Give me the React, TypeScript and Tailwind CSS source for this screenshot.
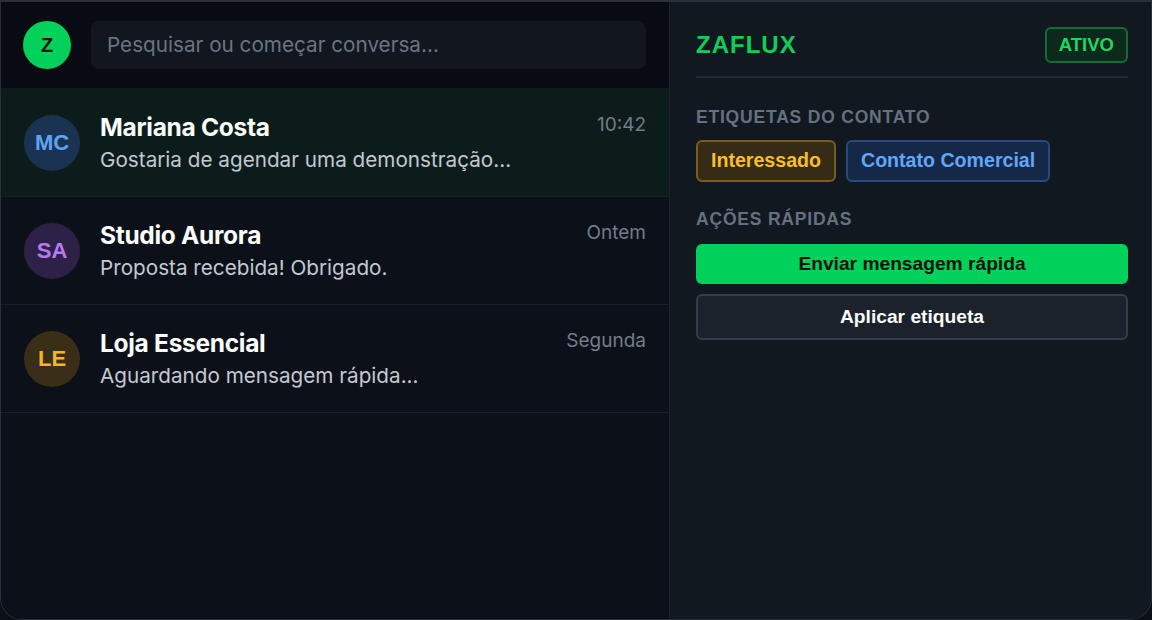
import React from "react";

const rows = [
  { initials: "MC", name: "Mariana Costa", time: "10:42", msg: "Gostaria de agendar uma demonstração...", avBg: "bg-[#1b3352]", avText: "text-[#5fa3f5]", active: true },
  { initials: "SA", name: "Studio Aurora", time: "Ontem", msg: "Proposta recebida! Obrigado.", avBg: "bg-[#2e2147]", avText: "text-[#b57bf0]", active: false },
  { initials: "LE", name: "Loja Essencial", time: "Segunda", msg: "Aguardando mensagem rápida...", avBg: "bg-[#3a2e17]", avText: "text-[#f5b524]", active: false },
];

export default function App() {
  return (
    <div className="w-[1152px] h-[620px] overflow-hidden bg-[#0b1017]">
      <div className="flex h-full border-t-2 border-x border-b border-[#2a3039] rounded-b-[22px] overflow-hidden font-['Inter',sans-serif]">
        {/* Left */}
        <div className="w-[669px] shrink-0 flex flex-col bg-[#0c1119] border-r border-[#1d232c]">
          <div className="h-[87px] shrink-0 flex items-center gap-[20px] pl-[22px] pr-[23px] bg-[#080c12] border-b border-[#141a22]">
            <div className="w-[48px] h-[48px] rounded-full bg-[#00d15b] flex items-center justify-center text-[#04120a] font-bold text-[20px] font-['Liberation_Sans',sans-serif]">Z</div>
            <div className="flex-1 h-[48px] rounded-lg bg-[#12171f] flex items-center px-[16px] text-[20.7px] text-[#6b7482]">
              Pesquisar ou começar conversa...
            </div>
          </div>
          {rows.map((r) => (
            <div
              key={r.name}
              className={`h-[108px] shrink-0 flex items-center gap-[20px] pl-[23px] pr-[23px] border-b border-[#1a2029] ${r.active ? "bg-[#0c1c1b]" : ""}`}
            >
              <div className={`w-[56px] h-[56px] rounded-full shrink-0 flex items-center justify-center font-bold text-[22px] font-['Liberation_Sans',sans-serif] ${r.avBg} ${r.avText}`}>
                {r.initials}
              </div>
              <div className="flex-1 flex flex-col gap-[5px] -mt-[1px]">
                <div className="flex items-start justify-between">
                  <span className="text-[24.5px] leading-[30px] font-bold text-white tracking-[-0.3px]">{r.name}</span>
                  <span className="text-[19px] leading-[26px] text-[#737c89]">{r.time}</span>
                </div>
                <div className="text-[20.7px] leading-[26px] text-[#c3c9d2]">{r.msg}</div>
              </div>
            </div>
          ))}
        </div>
        {/* Right */}
        <div className="flex-1 bg-[#111820] pl-[26px] pr-[23px] font-['Liberation_Sans',sans-serif]">
          <div className="h-[76px] flex items-center justify-between border-b-2 border-[#242b35] pt-[12px]">
            <span className="text-[24px] font-bold text-[#12cc5c] tracking-[1px]">ZAFLUX</span>
            <span className="h-[36px] px-[12px] flex items-center rounded-md border-2 border-[#156b38] bg-[#0b2a1b] text-[#1ed760] font-bold text-[18.5px]">ATIVO</span>
          </div>
          <div className="mt-[27px] text-[17.5px] leading-[24px] font-bold text-[#667180] tracking-[0.8px]">ETIQUETAS DO CONTATO</div>
          <div className="mt-[11px] flex gap-[10px]">
            <span className="h-[42px] px-[13px] flex items-center rounded-md border-2 border-[#7a5d1e] bg-[#362b14] text-[#fbbf24] font-bold text-[19.6px]">Interessado</span>
            <span className="h-[42px] px-[13px] flex items-center rounded-md border-2 border-[#294a7e] bg-[#162848] text-[#62a6f8] font-bold text-[19.6px]">Contato Comercial</span>
          </div>
          <div className="mt-[25px] text-[17.5px] leading-[24px] font-bold text-[#667180] tracking-[0.8px]">AÇÕES RÁPIDAS</div>
          <div className="mt-[13px] h-[40px] rounded-md bg-[#00d15b] flex items-center justify-center text-[19.2px] font-bold text-[#04120a]">
            Enviar mensagem rápida
          </div>
          <div className="mt-[10px] h-[46px] rounded-md bg-[#1c222b] border-2 border-[#363d48] flex items-center justify-center text-[19.2px] font-bold text-white">
            Aplicar etiqueta
          </div>
        </div>
      </div>
    </div>
  );
}
